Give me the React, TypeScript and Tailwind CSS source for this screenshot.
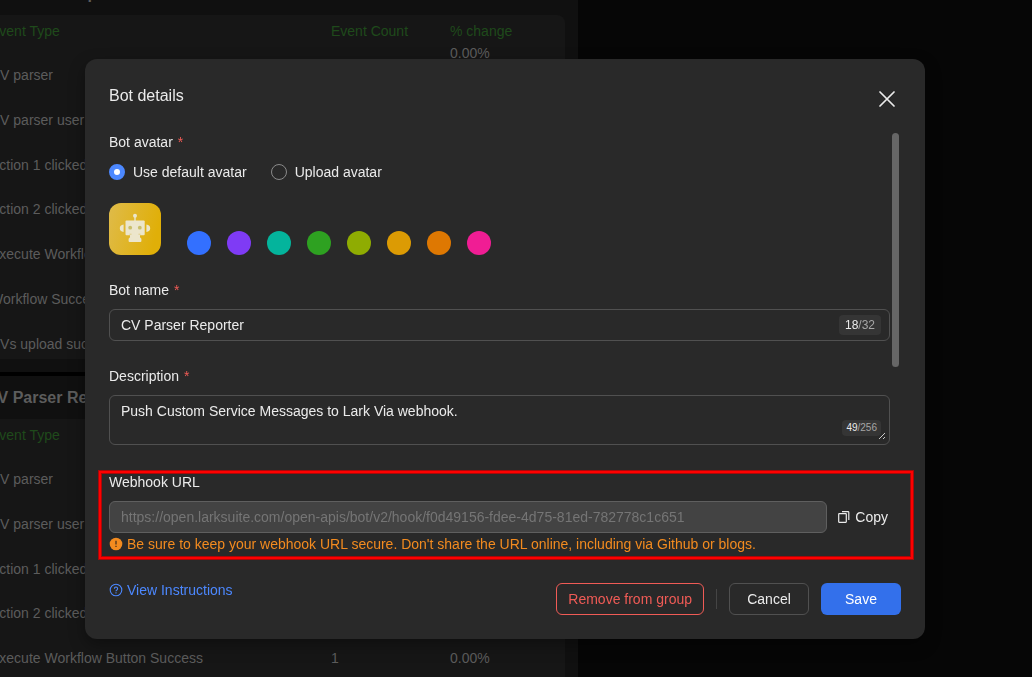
import { useState } from "react";
import type { ReactNode } from "react";

const events = [
  "CV parser",
  "CV parser user",
  "Action 1 clicked",
  "Action 2 clicked",
  "Execute Workflow Button Success",
  "Workflow Success",
  "CVs upload success",
];

const swatches = [
  { name: "Blue", color: "bg-[#3370ff]" },
  { name: "Purple", color: "bg-[#7f3bf5]" },
  { name: "Turquoise", color: "bg-[#04b49c]" },
  { name: "Green", color: "bg-[#2ea121]" },
  { name: "Lime", color: "bg-[#8fac02]" },
  { name: "Yellow", color: "bg-[#dc9b04]" },
  { name: "Orange", color: "bg-[#de7802]" },
  { name: "Pink", color: "bg-[#f01d94]" },
];

function Report({ extra }: { extra?: string }) {
  return (
    <section className="bg-[#101010] pb-[13px]">
      <h2 className="flex h-[43px] items-center text-base font-bold text-[#5c5c5c]">CV Parser Reporter</h2>
      <div className="mr-[13px] overflow-hidden rounded-lg bg-[#161616] pl-1">
        <table className="-my-[7px] h-[358px] w-full table-fixed border-collapse text-left text-sm leading-[22px] text-[#5c5c5c]">
          <colgroup>
            <col className="w-[341px]" />
            <col className="w-[119px]" />
            <col />
          </colgroup>
          <thead className="text-[#1f4a1b]">
            <tr className="h-[45px]">
              <th className="p-0 font-normal">Event Type</th>
              <th className="p-0 font-normal">Event Count</th>
              <th className="p-0 font-normal">
                % change
                {extra && <span className="-mb-[22px] block text-[#5c5c5c]">{extra}</span>}
              </th>
            </tr>
          </thead>
          <tbody>
            {events.map((name) => (
              <tr key={name}>
                <td className="p-0">{name}</td>
                <td className="p-0">1</td>
                <td className="p-0">0.00%</td>
              </tr>
            ))}
          </tbody>
        </table>
      </div>
    </section>
  );
}

function Label({ htmlFor, required, children }: { htmlFor?: string; required?: boolean; children: ReactNode }) {
  return (
    <label htmlFor={htmlFor} className="flex gap-[5px] text-sm leading-[18px]">
      {children}
      {required && <span className="text-[#f05b56]">*</span>}
    </label>
  );
}

function Robot() {
  return (
    <svg viewBox="0 0 52 52" className="size-[52px] shrink-0" role="img" aria-label="Robot avatar">
      <defs>
        <linearGradient id="gold" x1="0" y1="0" x2="1" y2="0.25">
          <stop offset="0" stopColor="#dfbb4a" />
          <stop offset="1" stopColor="#e0af08" />
        </linearGradient>
      </defs>
      <rect width="52" height="52" rx="12" fill="url(#gold)" />
      <g fill="#ece6cc">
        <circle cx="26" cy="12.8" r="2" />
        <rect x="25.3" y="13" width="1.4" height="5" />
        <rect x="16.500" y="17.500" width="19.200" height="14.800" rx="1" />
        <path d="M21 32h10v2.200l1.400 1.600v2.200q0 1-1 1H20.600q-1 0-1-1v-2.200l1.400-1.600z" />
        <path d="M14.600 21.500v7.500q-3.800-.6-3.800-3.750t3.800-3.750zM37.400 21.500v7.500q3.800-.6 3.800-3.750t-3.800-3.750z" />
      </g>
      <g fill="#c9bf6a">
        <circle cx="21.200" cy="24.700" r="1.900" />
        <circle cx="30.800" cy="24.700" r="1.900" />
      </g>
      <path d="M20.500 31.200h2M29.500 31.200h2" stroke="#e0cf88" strokeWidth="1" />
    </svg>
  );
}

function AvatarChoice({ label, checked, onChange }: { label: string; checked: boolean; onChange: () => void }) {
  return (
    <label className="flex items-center gap-2 text-sm leading-5">
      <input
        type="radio"
        name="avatar"
        checked={checked}
        onChange={onChange}
        className="size-4 appearance-none rounded-full border border-[#8a8a8a] checked:border-[5px] checked:border-[#4c88ff] checked:bg-white"
      />
      {label}
    </label>
  );
}

export default function App() {
  const [custom, setCustom] = useState(false);
  const [name, setName] = useState("CV Parser Reporter");
  const [description, setDescription] = useState("Push Custom Service Messages to Lark Via webhook.");

  return (
    <div className="h-screen overflow-hidden bg-[#060606] font-['Liberation_Sans',Arial,sans-serif]">
      <main className="-mt-7 -ml-[14px] flex w-[592px] flex-col gap-1 bg-black">
        <Report extra="0.00%" />
        <Report />
      </main>

      <div className="fixed inset-0 flex items-start justify-center pt-[59px] pr-[22px]">
        <div
          role="dialog"
          aria-labelledby="dialog-title"
          className="w-full max-w-[840px] rounded-xl bg-[#292929] px-6 pb-6 text-[#ebebeb] shadow-[0_6px_16px_rgba(0,0,0,0.35)]"
        >
          <header className="flex h-[74px] justify-between pt-6 pr-[6px]">
            <h1 id="dialog-title" className="text-base leading-[26px]">Bot details</h1>
            <button type="button" aria-label="Close" className="mt-2 size-4">
              <svg viewBox="0 0 16 16" className="size-4" fill="none" stroke="currentColor" strokeWidth="1.700" strokeLinecap="round">
                <path d="M1 1l14 14M15 1L1 15" />
              </svg>
            </button>
          </header>

          <div className="flex items-start gap-[2px] pr-[2px]">
            <div className="min-w-0 flex-1">
              <Label required>Bot avatar</Label>
              <div className="mt-[11px] flex gap-6">
                <AvatarChoice label="Use default avatar" checked={!custom} onChange={() => setCustom(false)} />
                <AvatarChoice label="Upload avatar" checked={custom} onChange={() => setCustom(true)} />
              </div>
              <div className="mt-[21px] flex items-end gap-[26px]">
                <Robot />
                <div className="flex gap-4">
                  {swatches.map((s) => (
                    <button key={s.name} type="button" aria-label={s.name} className={`size-6 rounded-full ${s.color}`} />
                  ))}
                </div>
              </div>

              <div className="mt-[26px] flex flex-col gap-[10px]">
                <Label htmlFor="bot-name" required>Bot name</Label>
                <div className="flex h-8 items-center rounded-md border border-[#505050] pr-2 pl-[11px]">
                  <input
                    id="bot-name"
                    value={name}
                    onChange={(e) => setName(e.target.value)}
                    className="min-w-0 flex-1 bg-transparent text-sm outline-none"
                  />
                  <span className="rounded bg-[#353535] px-[6px] text-xs leading-5 text-[#a6a6a6]">
                    <span className="text-[#ebebeb]">18</span>/32
                  </span>
                </div>
              </div>

              <div className="mt-[26px] flex flex-col gap-[10px]">
                <Label htmlFor="bot-description" required>Description</Label>
                <div className="relative flex h-[50px] rounded-md border border-[#505050]">
                  <textarea
                    id="bot-description"
                    value={description}
                    onChange={(e) => setDescription(e.target.value)}
                    className="flex-1 resize-none bg-transparent px-[11px] pt-[5px] text-sm leading-5 outline-none"
                  />
                  <span className="absolute right-2 bottom-2 rounded bg-[#353535] px-1 text-[10px] leading-4 text-[#a6a6a6]">
                    <span className="text-[#ebebeb]">49</span>/256
                  </span>
                  <svg viewBox="0 0 8 8" className="absolute right-[3px] bottom-1 size-2" fill="none" stroke="#c8c8c8" strokeWidth="1">
                    <path d="M1 7l6-6M5 7l2-2" />
                  </svg>
                </div>
              </div>

              <div className="relative mt-7 flex flex-col">
                <Label htmlFor="webhook-url">Webhook URL</Label>
                <div className="mt-[10px] flex items-center gap-[11px]">
                  <input
                    id="webhook-url"
                    disabled
                    value="https://open.larksuite.com/open-apis/bot/v2/hook/f0d49156-fdee-4d75-81ed-782778c1c651"
                    className="h-8 min-w-0 flex-1 rounded-md border border-[#5f5f5f] bg-[#434343] px-[11px] text-sm text-[#757575]"
                  />
                  <button type="button" className="mr-[2px] flex items-center gap-[5px] text-sm leading-5">
                    <svg viewBox="0 0 12 12" className="size-3" fill="none" stroke="currentColor" strokeWidth="1.200">
                      <rect x="0.700" y="2.700" width="7.600" height="8.600" rx="0.500" />
                      <path d="M4 0.700h6q.8 0 .8.800v7.500" />
                    </svg>
                    Copy
                  </button>
                </div>
                <p className="mt-[2px] flex items-center gap-1 text-sm leading-[18px] text-[#f38b1f]">
                  <svg viewBox="0 0 14 14" className="size-[14px] shrink-0">
                    <circle cx="7" cy="7" r="6.300" fill="currentColor" />
                    <path d="M7 3.800v3.800M7 8.700v1.400" stroke="#5a3a1a" strokeWidth="1.400" />
                  </svg>
                  Be sure to keep your webhook URL secure. Don't share the URL online, including via Github or blogs.
                </p>
                <div className="pointer-events-none absolute -top-[2px] -right-[23px] -bottom-[6px] -left-[10px] border-2 border-[#ff0000] shadow-[inset_0_0_0_1px_#a80808] outline outline-[#a80808]" />
              </div>
            </div>
            <div className="h-[234px] w-[7px] rounded-full bg-[#666666]" />
          </div>

          <footer className="mt-[30px] flex items-start justify-between">
            <a href="#instructions" className="flex items-center gap-1 text-sm leading-[14px] text-[#4c88ff]">
              <svg viewBox="0 0 14 14" className="size-[14px]" fill="none" stroke="currentColor" strokeWidth="1.100">
                <circle cx="7" cy="7" r="5.800" />
                <path d="M5.400 5.700a1.600 1.600 0 1 1 2.500 1.300q-.9.500-.9 1.300M7 9.300v1.100" />
              </svg>
              View Instructions
            </a>
            <div className="flex items-center gap-3 text-sm">
              <button type="button" className="h-8 rounded-md border border-[#f05b56] px-[11px] text-[#f05b56]">
                Remove from group
              </button>
              <div className="h-5 w-px bg-[#454545]" />
              <button type="button" className="h-8 w-20 rounded-md border border-[#505050]">Cancel</button>
              <button type="button" className="h-8 w-20 rounded-md bg-[#3370eb] text-white">Save</button>
            </div>
          </footer>
        </div>
      </div>
    </div>
  );
}
